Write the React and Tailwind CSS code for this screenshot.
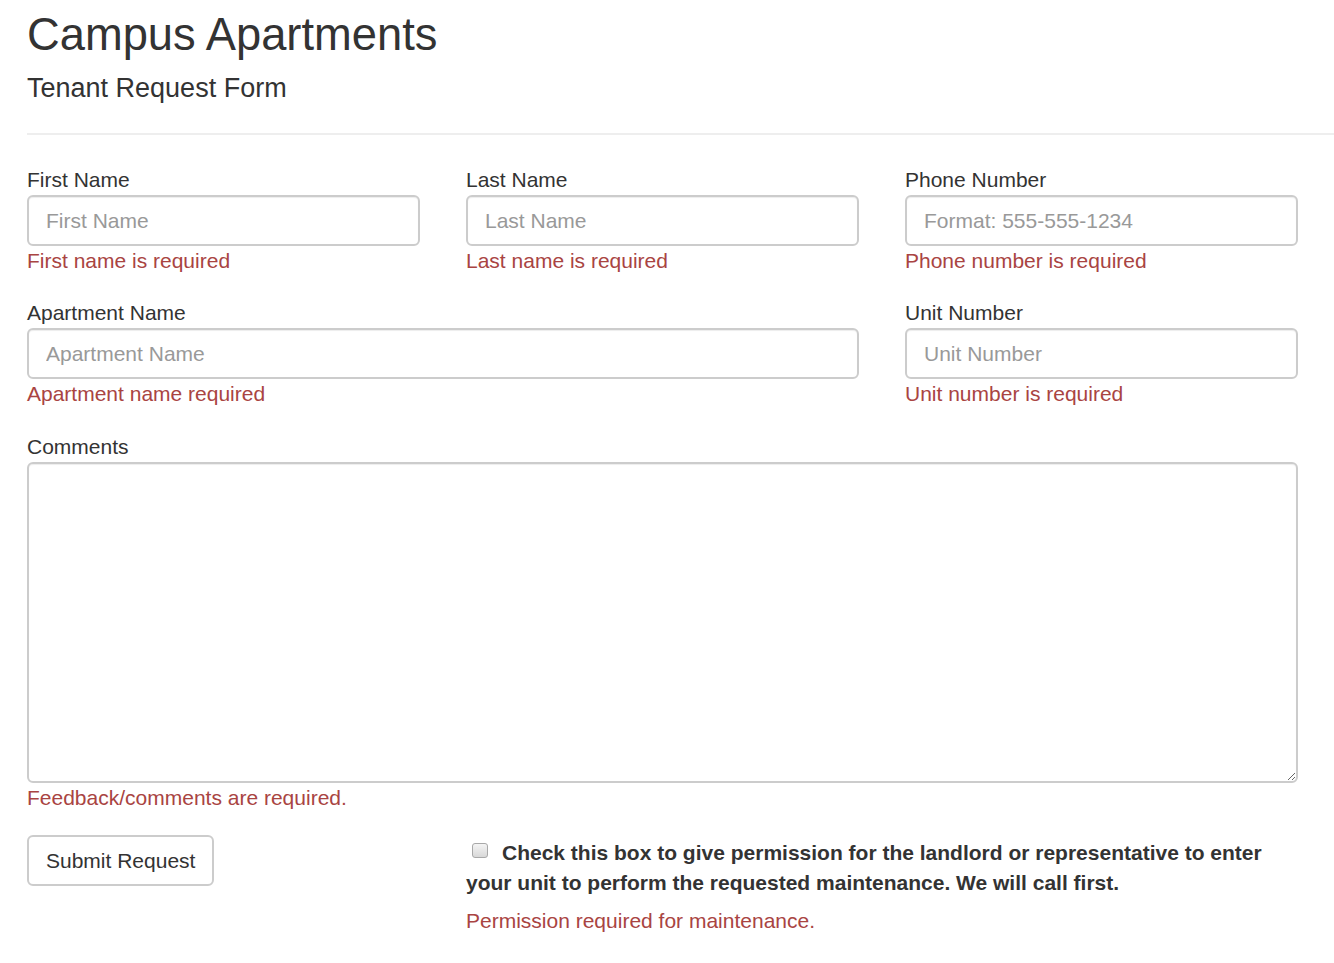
import { useState } from 'react'

const FIELD =
  'block w-full h-[51px] px-[17px] text-[21px] text-[#555] bg-white border-2 border-[#ccc] rounded-[6px] shadow-[inset_0_1px_1px_rgba(0,0,0,0.075)] placeholder:text-[#999] outline-none'

function Field({ label, placeholder, error, className = '' }) {
  return (
    <div className={className}>
      <label className="block leading-[30px]">{label}</label>
      <input type="text" placeholder={placeholder} className={FIELD} />
      <p className="leading-[30px] text-[#a94442]">{error}</p>
    </div>
  )
}

export default function App() {
  const [checked, setChecked] = useState(false)

  return (
    <div className="min-h-screen bg-white text-[#333] text-[21px] font-['Liberation_Sans',Arial,sans-serif]">
      {/* Header */}
      <div className="pl-[27px] pt-[10px]">
        <h1 className="text-[45.3px] leading-[50px] font-normal">Campus Apartments</h1>
        <h4 className="mt-[13px] text-[27px] leading-[30px] font-normal">Tenant Request Form</h4>
        <hr className="mt-[30px] border-0 border-t-2 border-[#eee]" />
      </div>

      {/* Form */}
      <form className="pl-[27px] pt-[30px] w-[1298px]" onSubmit={e => e.preventDefault()}>
        <div className="grid grid-cols-3 gap-x-[46px] gap-y-[22px]">
          <Field label="First Name" placeholder="First Name" error="First name is required" />
          <Field label="Last Name" placeholder="Last Name" error="Last name is required" />
          <Field label="Phone Number" placeholder="Format: 555-555-1234" error="Phone number is required" />
          <Field label="Apartment Name" placeholder="Apartment Name" error="Apartment name required" className="col-span-2" />
          <Field label="Unit Number" placeholder="Unit Number" error="Unit number is required" />
        </div>

        <div className="mt-[23px]">
          <label className="block leading-[30px]">Comments</label>
          <textarea className="block w-full h-[321px] px-[17px] py-[8px] text-[21px] bg-white border-2 border-[#ccc] rounded-[6px] shadow-[inset_0_1px_1px_rgba(0,0,0,0.075)] outline-none resize-y" />
          <p className="leading-[30px] text-[#a94442]">Feedback/comments are required.</p>
        </div>

        <div className="mt-[22px] grid grid-cols-3 gap-x-[46px]">
          <div>
            <button type="submit" className="h-[51px] px-[17px] text-[21px] text-[#333] bg-white border-2 border-[#ccc] rounded-[6px]">
              Submit Request
            </button>
          </div>
          <div className="col-span-2 pt-[3px]">
            <label className="block font-bold leading-[30px] cursor-pointer" onClick={() => setChecked(c => !c)}>
              <span className="inline-block align-[2px] ml-[6px] mr-[14px] w-[16px] h-[15px] rounded-[3px] border border-[#a8a8a8] bg-gradient-to-b from-[#f4f4f4] to-[#d8d8d8] relative">
                {checked && <span className="absolute inset-0 flex items-center justify-center text-[11px] leading-none text-[#333]">✓</span>}
              </span>
              Check this box to give permission for the landlord or representative to enter your unit to perform the requested maintenance. We will call first.
            </label>
            <p className="mt-[8px] leading-[30px] text-[#a94442]">Permission required for maintenance.</p>
          </div>
        </div>
      </form>
    </div>
  )
}
